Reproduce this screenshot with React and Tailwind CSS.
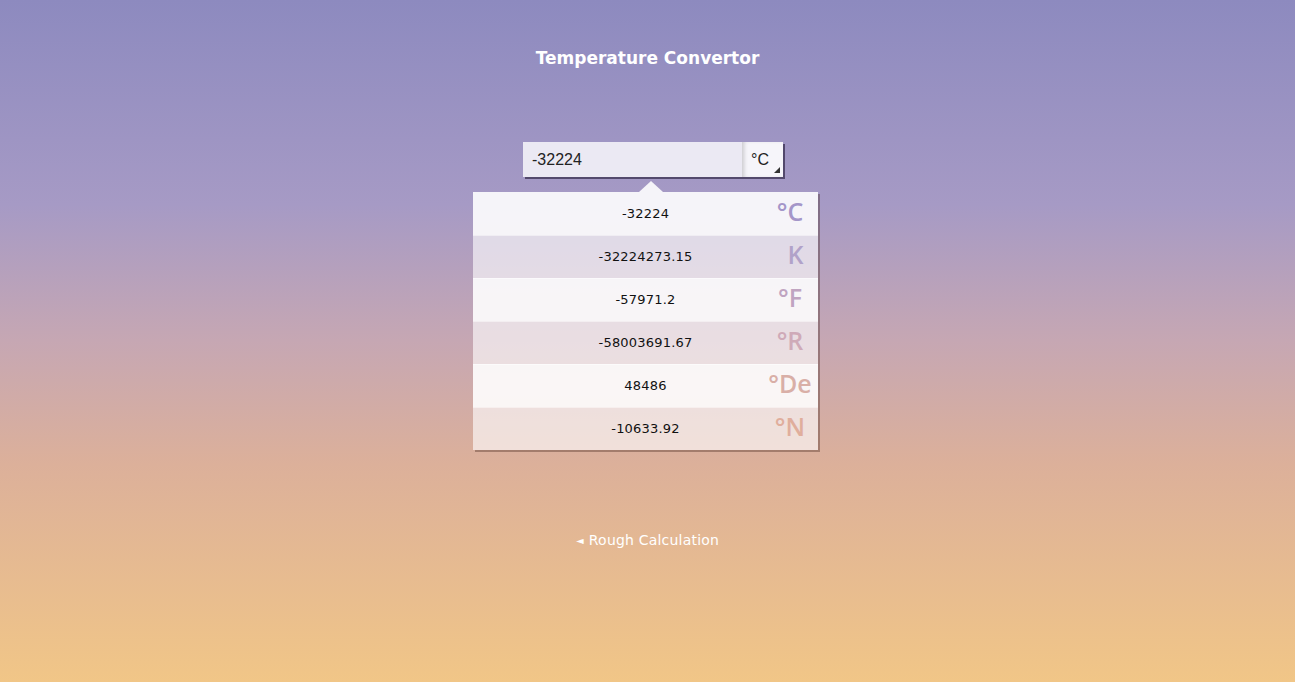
import React from "react";

const rows = [
  { v: "-32224", u: "°C", c: "text-[#a496c9]", bg: "bg-[rgba(255,255,255,0.89)]", deg: true },
  { v: "-32224273.15", u: "K", c: "text-[#b1a2c9]", bg: "bg-[rgba(255,255,255,0.62)]", deg: false },
  { v: "-57971.2", u: "°F", c: "text-[#c0a4c1]", bg: "bg-[rgba(255,255,255,0.89)]", deg: true },
  { v: "-58003691.67", u: "°R", c: "text-[#cfaab8]", bg: "bg-[rgba(255,255,255,0.62)]", deg: true },
  { v: "48486", u: "°De", c: "text-[#d9afa7]", bg: "bg-[rgba(255,255,255,0.89)]", deg: true },
  { v: "-10633.92", u: "°N", c: "text-[#e0ae9c]", bg: "bg-[rgba(255,255,255,0.62)]", deg: true },
];

export default function App() {
  return (
    <div className="w-full h-[682px] overflow-hidden bg-[linear-gradient(to_bottom,#8d8abf_0%,#a69ac5_30%,#c6a7b3_50%,#dcb09a_68%,#f1c687_100%)] flex flex-col items-center font-['DejaVu_Sans',sans-serif]">
      <h1 className="mt-[46px] text-[17px] leading-[24px] font-bold text-white">
        Temperature Convertor
      </h1>

      <div className="mt-[72px] ml-[11px] flex h-[35px] shadow-[2px_2px_0_rgba(30,20,50,0.6)]">
        <div className="w-[219px] bg-[#ebe9f3] flex items-center pl-[9px] text-[16px] text-[#222] font-['Liberation_Sans',sans-serif]">
          -32224
        </div>
        <div className="relative w-[41px] bg-[#f6f5fa] shadow-[inset_4px_0_4px_-2px_rgba(0,0,0,0.18)] flex items-center pl-[9px] text-[16px] text-[#222] font-['Liberation_Sans',sans-serif]">
          °C
          <span className="absolute right-[3px] bottom-[4px] w-0 h-0 border-l-[6px] border-l-transparent border-b-[6px] border-b-[#333]"></span>
        </div>
      </div>

      <div className="relative mt-[15px] -ml-[4px] w-[345px] shadow-[2px_2px_0_rgba(60,30,20,0.35)]">
        <span className="absolute -top-[11px] left-[166px] w-0 h-0 border-l-[12px] border-l-transparent border-r-[12px] border-r-transparent border-b-[11px] border-b-[rgba(255,255,255,0.89)]"></span>
        {rows.map((r, i) => (
          <div
            key={i}
            className={`relative h-[43px] flex items-center justify-center ${r.bg} ${i > 0 ? "border-t border-t-[rgba(255,255,255,0.5)]" : ""}`}
          >
            <span className="text-[13px] text-[#111] tracking-[0.2px]">{r.v}</span>
            <span
              className={`absolute right-[6px] top-[-2px] h-full w-[44px] flex items-center justify-center text-[25px] font-semibold font-['Open_Sans',sans-serif] ${r.c}`}
            >
              {!r.deg && <span className="opacity-0">°</span>}
              {r.u}
            </span>
          </div>
        ))}
      </div>

      <div className="mt-[80px] text-[14px] text-white tracking-[0.2px]">
        <span className="text-[10px] mr-[5px] relative -top-[1px]">◄</span>Rough Calculation
      </div>
    </div>
  );
}
